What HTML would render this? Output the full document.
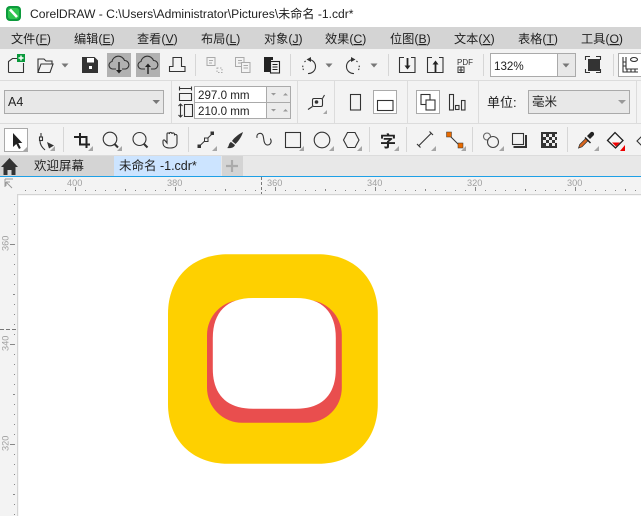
<!DOCTYPE html>
<html><head><meta charset="utf-8">
<style>
html,body{margin:0;padding:0;background:#fff;}
body{width:641px;height:516px;overflow:hidden;position:relative;font-family:"Liberation Sans","Noto Sans CJK SC",sans-serif;}
svg{position:absolute;left:0;top:0;}
text{font-family:"Liberation Sans","Noto Sans CJK SC",sans-serif;fill:#222;}
.m{font-size:12.2px;}
.r{font-size:9.2px;fill:#a0a0a0;}
.i{fill:none;stroke:#333;stroke-width:1.1;}
.l{fill:none;stroke:#aaa;stroke-width:1;}
.g{fill:#777;}
.t{fill:#a6a6a6;}
</style></head><body>
<svg width="641" height="516" viewBox="0 0 641 516" xmlns="http://www.w3.org/2000/svg">
<!-- backgrounds -->
<rect width="641" height="516" fill="#fff"/>
<rect y="27" width="641" height="22" fill="#d4d4d4"/>
<rect y="49" width="641" height="128" fill="#f3f3f3"/>
<rect y="80" width="641" height="1" fill="#dcdcdc"/>
<rect y="123" width="641" height="1" fill="#dcdcdc"/>
<rect y="155" width="641" height="1" fill="#dcdcdc"/>
<!-- title -->
<rect x="6" y="6" width="15" height="15" rx="4" fill="#0c9a3c"/>
<rect x="8" y="8" width="11" height="11" rx="2.5" fill="#2fc44f"/>
<path d="M10 9.500L17 17" stroke="#fff" stroke-width="2.600"/>
<text x="30" y="18" font-size="12.100">CorelDRAW - C:\Users\Administrator\Pictures\未命名 -1.cdr*</text>
<!-- menu -->
<g>
<text class="m" x="11" y="43">文件(<tspan text-decoration="underline">F</tspan>)</text>
<text class="m" x="74" y="43">编辑(<tspan text-decoration="underline">E</tspan>)</text>
<text class="m" x="137" y="43">查看(<tspan text-decoration="underline">V</tspan>)</text>
<text class="m" x="201" y="43">布局(<tspan text-decoration="underline">L</tspan>)</text>
<text class="m" x="264" y="43">对象(<tspan text-decoration="underline">J</tspan>)</text>
<text class="m" x="325" y="43">效果(<tspan text-decoration="underline">C</tspan>)</text>
<text class="m" x="390" y="43">位图(<tspan text-decoration="underline">B</tspan>)</text>
<text class="m" x="454" y="43">文本(<tspan text-decoration="underline">X</tspan>)</text>
<text class="m" x="518" y="43">表格(<tspan text-decoration="underline">T</tspan>)</text>
<text class="m" x="581" y="43">工具(<tspan text-decoration="underline">O</tspan>)</text>
</g>
<!-- toolbar 1 -->
<path class="i" d="M8.500 72.500V61.500L12.500 58.500H18M23.500 63V72.500H8.500"/>
<rect x="17" y="54" width="8" height="8" fill="#0a9a3c"/><path d="M21 55.500v5M18.500 58h5" stroke="#fff" stroke-width="1.400"/>
<path d="M38 72.500V59h6l2 2h6v3" class="i"/><path d="M38 72.500L41 64H53L50 72.500Z" class="i"/>
<path d="M61.500 63.500h7l-3.500 4z" class="g"/>
<path d="M82 57h12.500l3.500 3.500V73H82Z" fill="#333"/><rect x="87" y="58" width="7" height="4.500" fill="#fff"/><rect x="89" y="66" width="3" height="3" fill="#fff"/>
<rect x="107" y="53" width="24" height="24" fill="#b1b1b1"/><rect x="136" y="53" width="24" height="24" fill="#b1b1b1"/>
<path class="i" d="M116 69h-3.500a3.800 3.800 0 0 1-.5-7.500a6.500 6.500 0 0 1 12.500-1a4.300 4.300 0 0 1 1 8.500H122"/>
<path d="M119 62v9" stroke="#222" stroke-width="1.400"/><path d="M116 70h6L119 73.500z" fill="#222"/>
<path class="i" d="M145 69h-3.500a3.800 3.800 0 0 1-.5-7.500a6.500 6.500 0 0 1 12.500-1a4.300 4.300 0 0 1 1 8.500H151"/>
<path d="M148 66v8" stroke="#222" stroke-width="1.400"/><path d="M145 67h6L148 63.500z" fill="#222"/>
<path class="i" d="M169.500 71.500h15.500v-5h-3.500v-9h-8.500v9h-3.500z"/>
<rect x="195" y="54" width="1" height="22" fill="#d6d6d6"/>
<g class="l"><path d="M207 57.500h8v8h-8zM209 60.500h4M209 63h3"/><path d="M217 68h5v4.500h-5z" stroke-dasharray="1.500 1.500"/>
<path d="M235.500 57.500h8.500v9h-8.500zM238 60.500h4M238 63h3"/><rect x="241.500" y="62.500" width="8.500" height="10" fill="#f3f3f3"/><path d="M243.500 65.500h4.500M243.500 68h4.500"/></g>
<path d="M264 57h9v3h-2v12h-7z" fill="#222"/><rect x="270.500" y="61.500" width="9" height="11.500" fill="#f3f3f3" stroke="#222" stroke-width="1.100"/><path d="M272.500 64.500h5M272.500 67h5M272.500 69.500h5" stroke="#222"/>
<rect x="290" y="54" width="1" height="22" fill="#d6d6d6"/>
<path class="i" d="M309 59.500a7 7 0 1 1-1 14"/><path d="M303.500 70a7 7 0 0 1-.5-5M304.500 62l1.500-1.500" class="i" stroke-dasharray="1.500 1.500"/><path d="M311 57l-4.500 2.500 4.500 2.500z" fill="#333"/>
<path d="M325.500 63.500h7l-3.500 4z" class="g"/>
<path class="i" d="M353 59.500a7 7 0 1 0 1 14"/><path d="M358.500 70a7 7 0 0 0 .5-5M357.500 62l-1.500-1.500" class="i" stroke-dasharray="1.500 1.500"/><path d="M351 57l4.500 2.500-4.500 2.500z" fill="#333"/>
<path d="M370.500 63.500h7l-3.500 4z" class="g"/>
<rect x="388" y="54" width="1" height="22" fill="#d6d6d6"/>
<path class="i" d="M404 57.500h-4.500v15h15.500v-15h-4"/><path d="M407.500 58v8" stroke="#222" stroke-width="1.800"/><path d="M404.500 65.500h6l-3 4z" fill="#222"/>
<path class="i" d="M432 57.500h-4.500v15h15.500v-15h-4"/><path d="M435.500 64v8" stroke="#222" stroke-width="1.800"/><path d="M432.500 64.500h6l-3-4z" fill="#222"/>
<text x="457" y="65" font-size="8" style="fill:#333">PDF</text><path d="M458 72.500v-5.500h6v5.500zM461 67.500v5M459 70h4" stroke="#333" fill="none"/>
<rect x="483" y="54" width="1" height="22" fill="#d6d6d6"/>
<rect x="490.500" y="53.500" width="85" height="23" fill="#fff" stroke="#aaa"/><rect x="557" y="54" width="18" height="22" fill="#e8e8e8"/><path d="M557.500 54v22" stroke="#aaa"/>
<path d="M562.500 63.500h7L566 67.500z" class="g"/>
<text x="494" y="70" font-size="11.600">132%</text>
<rect x="588" y="59" width="12" height="12" fill="#333"/><path class="i" d="M585.500 60v-3.500H590M596 56.500h4.500V60M585.500 69v3.500H590M596 72.500h4.500V69"/>
<rect x="613" y="54" width="1" height="22" fill="#d6d6d6"/>
<rect x="618.500" y="53.500" width="30" height="23" fill="#fff" stroke="#aaa"/>
<path class="i" d="M623 57v15h15M626 57v12h12M623 62h3M623 66h3M627 72v-3M631 72v-3M635 72v-3"/><ellipse cx="634" cy="59.500" rx="3.500" ry="2" class="i"/>
<!-- property bar -->
<g fill="#dcdcdc"><rect x="171" y="81" width="1" height="42"/><rect x="297" y="81" width="1" height="42"/><rect x="334" y="81" width="1" height="42"/><rect x="407" y="81" width="1" height="42"/><rect x="478" y="81" width="1" height="42"/><rect x="636" y="81" width="1" height="42"/></g>
<rect x="4.500" y="90.500" width="159" height="23" fill="#e8e8e8" stroke="#aaa"/>
<text x="8" y="106" font-size="12.500">A4</text><path d="M152.500 100h7.500l-3.750 4z" class="g"/>
<path class="i" d="M179.500 88.500h12M179.500 86.500v4M191.500 86.500v4M179.500 93.500h12v7h-12z"/>
<path class="i" d="M184.500 104.500h8v12h-8zM180.500 104.500v12"/><path d="M178.500 106l2-2 2 2M178.500 115l2 2 2-2" class="i"/>
<rect x="194.500" y="86.500" width="96" height="32" fill="#fff" stroke="#aaa"/><rect x="267" y="87" width="23" height="31" fill="#ececec"/><path d="M194 102.500h97M266.500 86v32" stroke="#aaa"/>
<text x="198" y="99" font-size="11.600">297.0 mm</text><text x="198" y="115" font-size="11.600">210.0 mm</text>
<path d="M271 93h5l-2.500 2.500zM283 95.500h5l-2.500-2.500zM271 109h5l-2.500 2.500zM283 111.500h5l-2.500-2.500z" fill="#999"/>
<rect x="312.500" y="98.500" width="10" height="8" rx="1.500" class="i"/><path d="M308 109.500l4.500-3M322.500 98.500l2-3.500" class="i"/><circle cx="316.500" cy="102" r="1.800" fill="#333"/><path d="M327 110l-4 4h4z" class="t"/>
<rect x="350.500" y="94.500" width="10" height="15.500" class="i"/>
<rect x="373.500" y="90.500" width="23" height="23" fill="#fff" stroke="#aaa"/><rect x="377.500" y="100.500" width="15.500" height="10" class="i"/>
<rect x="416.500" y="90.500" width="23" height="23" fill="#fff" stroke="#aaa"/><rect x="421" y="94.500" width="9" height="10" class="i"/><rect x="426" y="100" width="9" height="10" fill="#fff" stroke="#333" stroke-width="1.100"/>
<rect x="449.500" y="94.500" width="4" height="15.500" class="i"/><rect x="455.500" y="105.500" width="3.500" height="4" class="i"/><rect x="461.500" y="100.500" width="3.500" height="9.500" class="i"/>
<text x="487" y="107" font-size="13">单位:</text>
<rect x="528.500" y="90.500" width="101" height="23" fill="#e8e8e8" stroke="#aaa"/><text x="532" y="106" font-size="12.500">毫米</text>
<path d="M618 100h8l-4 4z" fill="#999"/>
<!-- toolbox -->
<rect x="4.500" y="128.500" width="23" height="23" fill="#fff" stroke="#aaa"/>
<path d="M13 133v14l3.300-3 2.700 5 1.800-1-2.500-5h4z" fill="#222"/>
<path d="M23 151h4v-4z" class="t"/>
<rect x="63" y="127" width="1" height="25" fill="#d6d6d6"/><rect x="188" y="127" width="1" height="25" fill="#d6d6d6"/><rect x="369" y="127" width="1" height="25" fill="#d6d6d6"/><rect x="406" y="127" width="1" height="25" fill="#d6d6d6"/><rect x="472" y="127" width="1" height="25" fill="#d6d6d6"/><rect x="567" y="127" width="1" height="25" fill="#d6d6d6"/>
<path class="i" d="M41 133v4M40 141c0 3 1.500 6 5 9"/><rect x="39.500" y="137" width="3" height="3.500" class="i"/><path d="M47 142l7 3.500-5 3z" fill="#333"/><path d="M50 151h5v-5z" class="t"/>
<!-- crop -->
<path d="M80 133v11.500h10M74 137h12.500v11" fill="none" stroke="#222" stroke-width="2"/><path d="M88 151h5v-5z" class="t"/>
<circle cx="110" cy="139" r="6.800" class="i"/><path d="M114.500 144l3.500 3.500" stroke="#333" stroke-width="2"/><path d="M117 151h5v-5z" class="t"/>
<circle cx="139.500" cy="139" r="6.500" class="i"/><path d="M144 144l3.500 3.500" stroke="#333" stroke-width="2"/>
<path class="i" d="M163 141v2c0 3 2.500 5 7 5s7-2 7-5v-7.500c-.5-1.500-2.500-1.500-2.500 0V134c-.5-1.500-2.500-1.500-2.500 0v-.5c-.5-1.500-2.500-1.500-2.500 0v.5c-.5-1.500-2.500-1.500-2.500 0v9l-2-2.500c-1-1-2-.5-2 .5z"/>
<!-- node -->
<path d="M199 146.500l13.500-13" stroke="#333"/><rect x="197.500" y="144.500" width="3.500" height="3.500" fill="#333"/><rect x="204.500" y="138" width="3.500" height="3.500" fill="#f3f3f3" stroke="#333"/><rect x="210.500" y="131.500" width="3.500" height="3.500" fill="#333"/><path d="M212 151h5v-5z" class="t"/>
<path d="M243 132c-5 2.500-9 6-11 9l3.500 3c3-3 6-7 7.500-12zM231 142c-2 1-2 3-2.500 4-.5 1-1 2-1.500 2 3 .5 7 0 8-3z" fill="#333"/>
<path class="i" d="M257 137.500c-1-4 4.500-6 6-2 1 3 .5 5 1.500 7 1 3 4 3 5.500 1.500s1.500-3 .5-5" stroke-linecap="round"/>
<rect x="285.500" y="132.500" width="15" height="15" class="i"/><path d="M299 151h5v-5z" class="t"/>
<circle cx="322" cy="140" r="7.800" class="i"/><path d="M329 151h5v-5z" class="t"/>
<path class="i" d="M347.500 132.500h7.500l4 7.500-4 7.500h-7.500l-4-7.500z"/><path d="M357 151h5v-5z" class="t"/>
<text x="380" y="147" font-size="16" font-weight="700">字</text><path d="M394 151h5v-5z" class="t"/>
<path class="i" d="M418.500 146l13-13M417 144l3.500 3.500M429.500 131.500l3.500 3.500"/><path d="M431 151h5v-5z" class="t"/>
<path d="M449 135l11 11" stroke="#333"/><rect x="446.500" y="132" width="5" height="5" fill="#e86a00" stroke="#333" stroke-width=".5"/><rect x="458" y="143" width="5" height="5" fill="#e86a00" stroke="#333" stroke-width=".5"/><path d="M461 151h5v-5z" class="t"/>
<circle cx="487" cy="136.500" r="3.500" class="i" style="stroke:#666"/><circle cx="493" cy="142" r="5.500" fill="#f3f3f3" stroke="#444" stroke-width="1.100"/><path d="M499 151h5v-5z" class="t"/>
<rect x="512.500" y="133.500" width="11" height="11" class="i"/><path d="M526 135v12h-12.500" fill="none" stroke="#333" stroke-width="2"/>
<rect x="541" y="132" width="16" height="16" fill="#333"/>
<path d="M543 134h3v3h-3zM549 134h3v3h-3zM555 134h2v3h-2zM546 137h3v3h-3zM552 137h3v3h-3zM543 140h3v3h-3zM549 140h3v3h-3zM555 140h2v3h-2zM546 143h3v3h-3zM552 143h3v3h-3z" fill="#eee"/>
<!-- eyedropper -->
<path d="M578.500 148l1.200-3.500 6-6 2.300 2.300-6 6z" fill="#d9661f" stroke="#333" stroke-width=".7"/><path d="M585 137.500l5.500 5.500" stroke="#222" stroke-width="1.400"/><path d="M587 136l3.500-3.500c1-1 2.500-.5 3 0s1 2 0 3L590 139z" fill="#222"/><path d="M594 151h5v-5z" class="t"/>
<!-- fill -->
<path d="M607.500 140.500l7.500-8 8 8-7.500 7.500z" fill="#f7f7f7" stroke="#222" stroke-width="1.300"/><path d="M612 142.500h8l-4 4z" fill="#e00"/><path d="M620 151h5v-6z" fill="#e00"/>
<path class="i" d="M637 141l5-5v10z"/>
<!-- tabs -->
<rect y="156" width="641" height="20" fill="#e8e8e8"/>
<rect y="156" width="114" height="20" fill="#d4d4d4"/>
<rect x="114" y="156" width="107" height="20" fill="#cce4ff"/>
<rect x="222" y="156" width="21" height="20" fill="#d4d4d4"/>
<path d="M9.500 158L1 167h2.500v8H7.500v-5h4v5h4v-8H18z" fill="#333"/>
<text x="34" y="170" font-size="12.500">欢迎屏幕</text>
<text x="119" y="170" font-size="12.500">未命名 -1.cdr*</text>
<path d="M232 160v12M226 166h12" stroke="#aaa" stroke-width="2.200"/>
<rect y="176" width="641" height="1.500" fill="#1ea0e6"/>
<!-- rulers -->
<rect y="177" width="641" height="17" fill="#f3f3f3"/>
<rect y="177" width="17" height="339" fill="#f3f3f3"/>
<rect x="17" y="194" width="624" height="1.200" fill="#d4d4d4"/>
<rect x="17" y="194" width="1.200" height="322" fill="#d4d4d4"/>
<path d="M25 190.500H641" stroke="#888" stroke-dasharray="1 9" fill="none"/>
<path d="M14.500 204V516" stroke="#888" stroke-dasharray="1 9" fill="none"/>
<path d="M75.500 187v4M175.500 187v4M275.500 187v4M375.500 187v4M475.500 187v4M575.500 187v4M125.500 189v2M225.500 189v2M325.500 189v2M425.500 189v2M525.500 189v2M625.500 189v2" stroke="#888" fill="none"/>
<path d="M10 244.500h5M10 344.500h5M10 444.500h5M13 294.500h2M13 394.500h2M13 494.500h2" stroke="#888" fill="none"/>
<path d="M261.500 177v17" stroke="#777" stroke-dasharray="3 2" fill="none"/>
<path d="M0 329.500h17" stroke="#777" stroke-dasharray="4 2" fill="none"/>
<path d="M6 182l6 6M6 182h4M6 182v4M5 179h8M5 179v8" stroke="#999" fill="none"/>
<text class="r" x="67" y="186">400</text><text class="r" x="167" y="186">380</text><text class="r" x="267" y="186">360</text><text class="r" x="367" y="186">340</text><text class="r" x="467" y="186">320</text><text class="r" x="567" y="186">300</text>
<text class="r" transform="translate(8.500 251) rotate(-90)">360</text>
<text class="r" transform="translate(8.500 351) rotate(-90)">340</text>
<text class="r" transform="translate(8.500 451) rotate(-90)">320</text>
<!-- artwork -->
<path d="M228 254.300H318C354 254.300 377.800 278 377.800 314V404C377.800 440 354 463.800 318 463.800H228C192 463.800 168 440 168 404V314C168 278 192 254.300 228 254.300Z" fill="#fed000"/>
<rect x="207" y="300" width="134.800" height="122.800" rx="35" fill="#e94e4e"/>
<path d="M253 298H296C322 298 335.800 312 335.800 338V368.700C335.800 395 322 408.700 296 408.700H253C227 408.700 212.800 395 212.800 368.700V338C212.800 312 227 298 253 298Z" fill="#fff"/>
</svg>
</body></html>
